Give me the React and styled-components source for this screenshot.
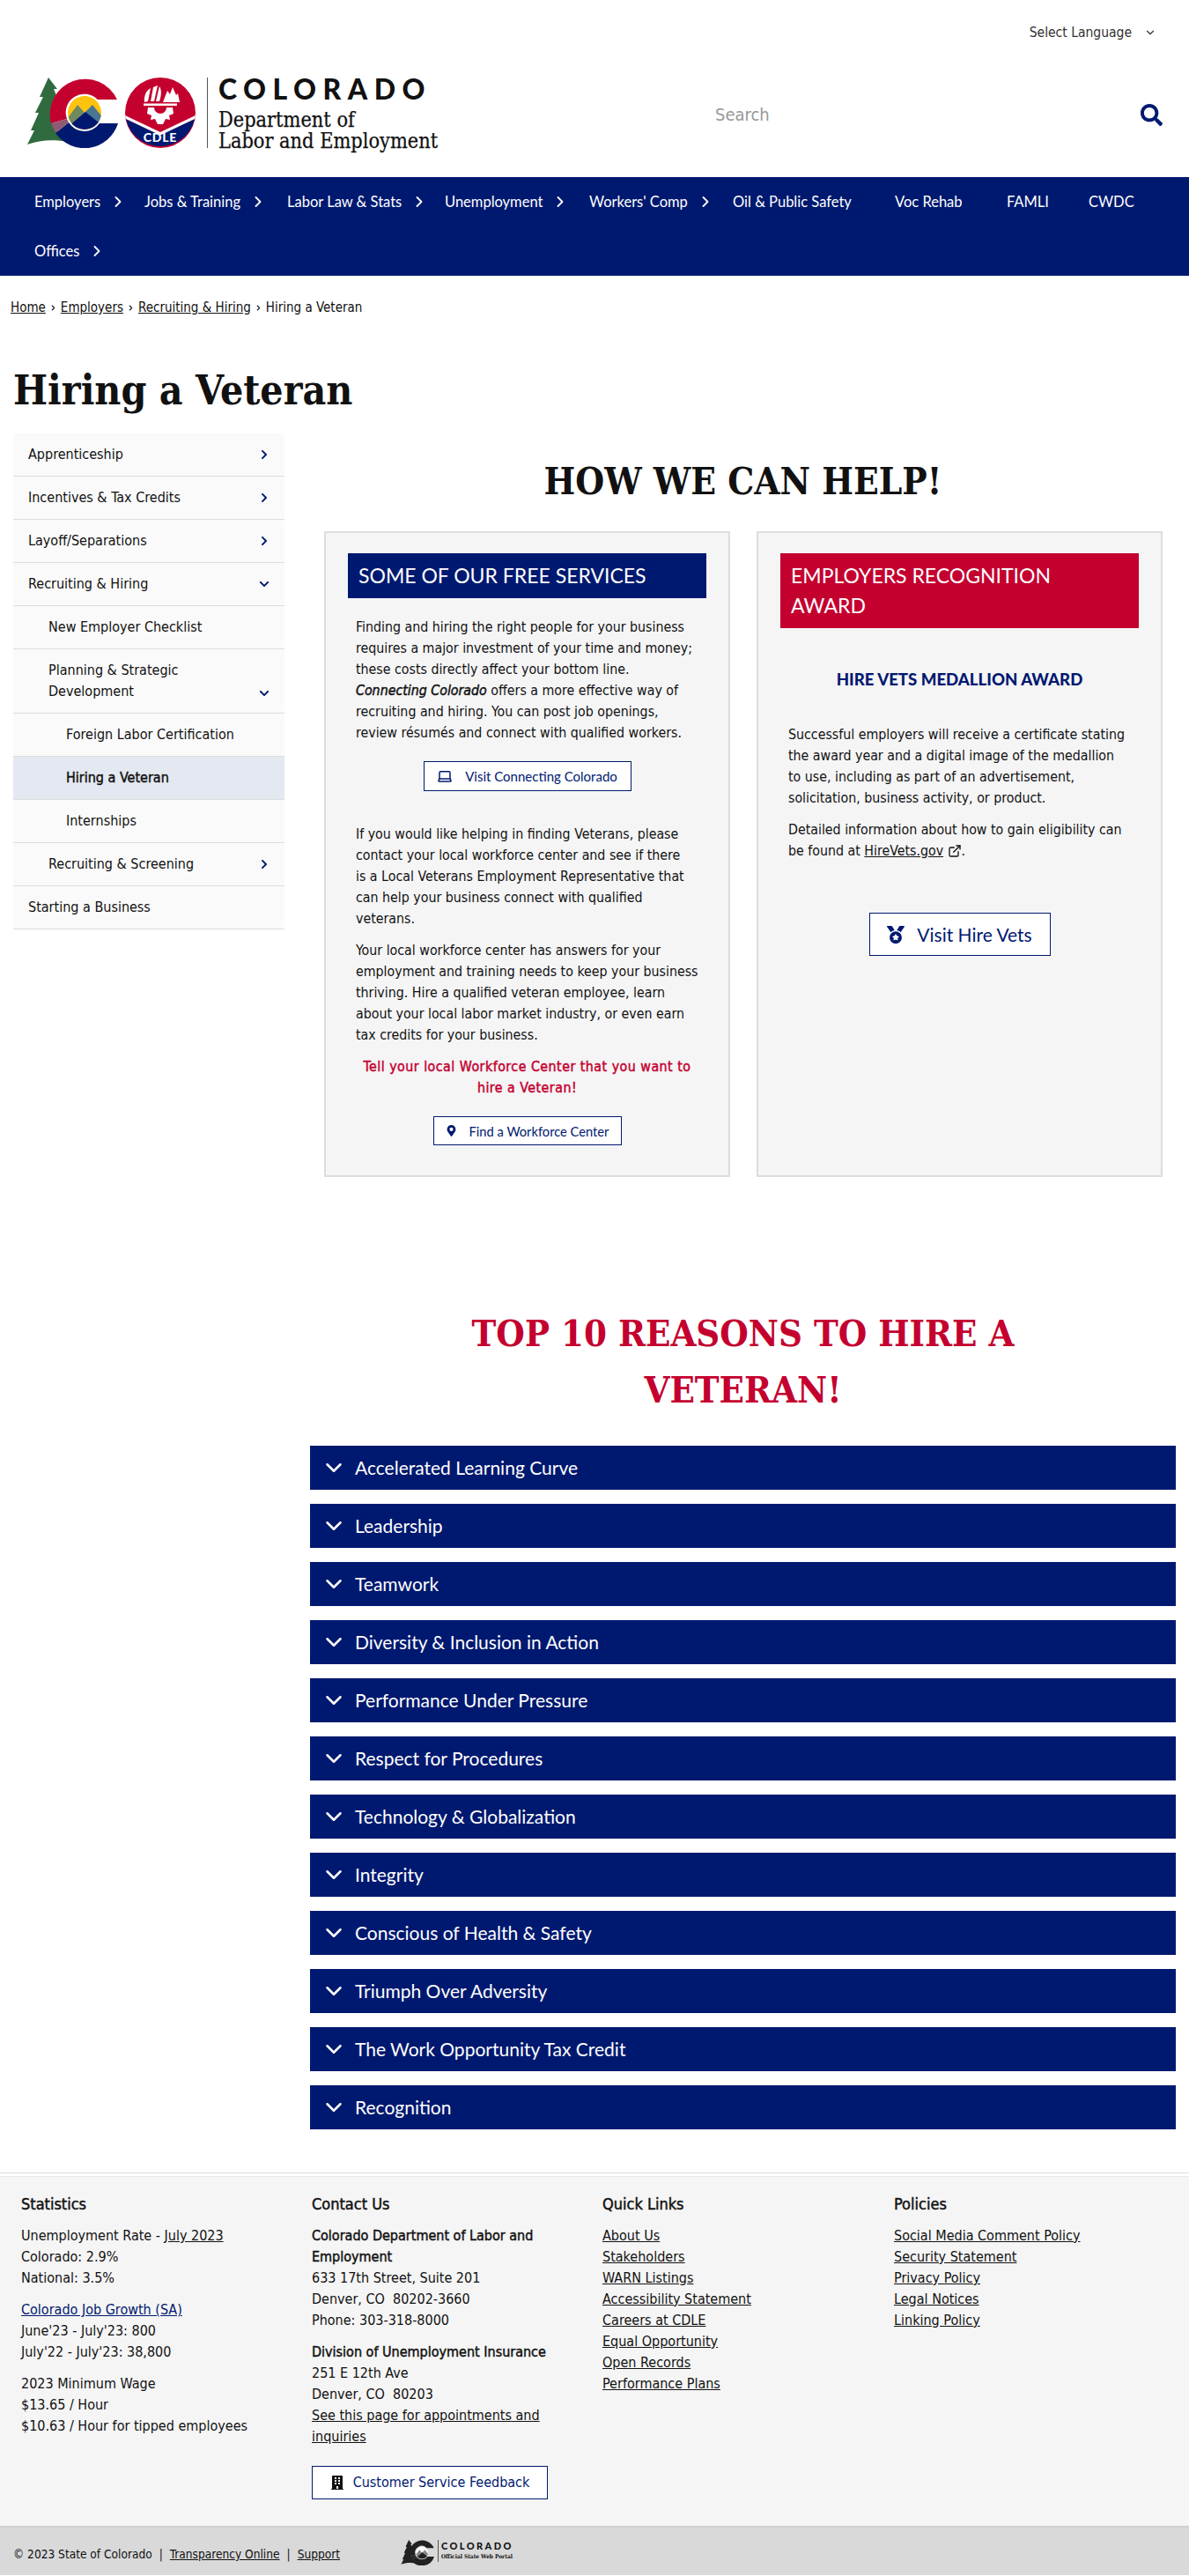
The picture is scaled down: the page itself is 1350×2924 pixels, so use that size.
import React from "react";
import styled, { createGlobalStyle, css } from "styled-components";
import { FaSearch, FaChevronRight, FaChevronDown, FaMapMarkerAlt, FaMedal, FaBuilding } from "react-icons/fa";
import { FiChevronRight, FiChevronDown, FiExternalLink } from "react-icons/fi";
import { Laptop } from "lucide-react";

const NAVY = "#001970";
const RED = "#c4002f";
const BODY = `"DejaVu Sans", "Noto Sans", sans-serif`;
const UI = `"Lato", "Noto Sans", sans-serif`;
const SLAB = `"DejaVu Serif", "Liberation Serif", serif`;

// the site's bold is thinner and narrower than DejaVu's real bold
const softBold = css`
  font-weight: 400;
  -webkit-text-stroke: 0.45px currentColor;
`;

const GlobalStyle = createGlobalStyle`
  html, body { margin: 0; padding: 0; background: #fff; }
  body { font-family: ${BODY}; font-stretch: condensed; font-size: 16px; line-height: 24px; color: #111; }
  * { box-sizing: border-box; }
  a { color: inherit; }
`;

const Page = styled.div`
  width: 1350px;
  height: 2924px;
  overflow: hidden;
`;

const Header = styled.header`
  height: 201px;
  display: flex;
  flex-direction: column;
`;

const TopBar = styled.div`
  display: flex;
  justify-content: flex-end;
  align-items: flex-start;
  gap: 14px;
  padding: 25px 37px 0 0;
  height: 88px;
  font-size: 15.5px;
  color: #333;
  svg { margin-top: 5px; }
`;

const Brand = styled.div`
  display: flex;
  align-items: flex-start;
  padding-left: 30px;
`;

const MarkGap = styled.div`
  width: 8px;
`;

const LogoDivider = styled.div`
  width: 1px;
  height: 80px;
  background: #555;
  margin: 0 12px 0 13px;
`;

const LogoText = styled.div`
  display: flex;
  flex-direction: column;
  width: 255px;
`;

const LogoState = styled.div`
  font-family: ${UI};
  font-weight: 900;
  font-size: 32px;
  line-height: 26px;
  letter-spacing: 7.5px;
  color: #111;
`;

const LogoDept = styled.div`
  font-family: ${SLAB};
  font-stretch: condensed;
  font-size: 23.3px;
  -webkit-text-stroke: 0.25px #111;
  line-height: 24px;
  margin-top: 10px;
  color: #111;
  white-space: nowrap;
`;

const SearchBox = styled.div`
  margin: 2px 0 0 309px;
  width: 508px;
  height: 80px;
  display: flex;
  align-items: center;
  justify-content: space-between;
  font-size: 20px;
  color: #999;
  svg { color: ${NAVY}; }
`;

const Nav = styled.nav`
  background: ${NAVY};
  height: 112px;
  padding-left: 39px;
  display: flex;
  flex-wrap: wrap;
  align-content: flex-start;
`;

const NavItem = styled.a`
  width: ${(p) => p.$w}px;
  height: 56px;
  display: flex;
  align-items: center;
  color: #fff;
  font-family: ${UI};
  font-size: 16.5px;
  white-space: nowrap;
  svg { margin-left: 10px; }
`;

const Crumbs = styled.div`
  display: flex;
  align-items: center;
  gap: 5px;
  padding: 15px 0 0 12px;
  font-size: 15px;
  line-height: 24px;
  color: #111;
  margin-top: 9px;
`;

const PageTitle = styled.h1`
  font-family: ${SLAB};
  font-stretch: condensed;
  font-weight: 700;
  font-size: 46px;
  line-height: 56px;
  margin: 54px 0 22px 15px;
  color: #111;
`;

const Columns = styled.div`
  display: grid;
  grid-template-columns: 308px 983px;
  column-gap: 29px;
  padding-left: 15px;
  align-items: start;
`;

const SideNav = styled.aside`
  display: flex;
  flex-direction: column;
  margin-top: -1px;
`;

const SideRow = styled.a`
  display: flex;
  align-items: ${(p) => (p.$tall ? "flex-end" : "center")};
  justify-content: space-between;
  min-height: 49px;
  padding: ${(p) => (p.$tall ? "12px" : "0")} 17px ${(p) => (p.$tall ? "12px" : "0")} ${(p) => 17 + p.$level * 23 - (p.$level === 2 ? 3 : 0)}px;
  background: ${(p) => (p.$active ? "#e4e8f1" : "#fafafa")};
  border-bottom: 1px solid #ddd;
  font-size: 16px;
  color: #111;
  ${(p) => p.$active && softBold}
  svg { color: ${NAVY}; flex: none; margin-bottom: ${(p) => (p.$tall ? "4px" : "0")}; }
`;

const SideLabel = styled.span`
  max-width: 200px;
`;

const Main = styled.main`
  display: flex;
  flex-direction: column;
`;

const SectionHeading = styled.h2`
  font-family: ${SLAB};
  font-stretch: condensed;
  font-weight: 700;
  font-size: 42px;
  line-height: 56px;
  text-align: center;
  margin: 26px 0 28px;
  color: #111;
`;

const Cards = styled.div`
  display: grid;
  grid-template-columns: 461px 461px;
  column-gap: 30px;
  padding: 0 16px;
`;

const Card = styled.section`
  height: 733px;
  background: #f5f5f6;
  border: 2px solid #ddd;
  padding: 23px 25px;
`;

const CardBanner = styled.div`
  background: ${(p) => p.$bg};
  color: #fff;
  font-family: ${UI};
  font-size: 23px;
  line-height: 34px;
  padding: 8px 12px 9px;
  margin-bottom: ${(p) => p.$gap}px;
`;

const Copy = styled.div`
  padding: 0 ${(p) => (p.$narrow ? 12 : 9)}px 0 9px;
  font-size: 15.8px;
  line-height: 24px;
  p { margin: 0 0 12px; }
`;

const Strong = styled.span`
  ${softBold}
`;

const Callout = styled.p`
  color: ${RED};
  text-align: center;
  letter-spacing: 0.5px;
  ${softBold}
`;

const AwardTitle = styled.h3`
  color: ${NAVY};
  font-family: ${UI};
  font-size: 18.6px;
  font-weight: 900;
  line-height: 24px;
  margin: 0 0 39px;
  text-align: center;
`;

const ExternalIcon = styled(FiExternalLink)`
  vertical-align: -3px;
`;

const ButtonRow = styled.div`
  display: flex;
  justify-content: ${(p) => p.$align || "center"};
  margin: ${(p) => p.$top || 0}px 0 ${(p) => p.$bottom || 0}px ${(p) => p.$left || 0}px;
`;

const OutlineButton = styled.a`
  display: flex;
  align-items: center;
  justify-content: center;
  gap: ${(p) => p.$gap}px;
  width: ${(p) => p.$w}px;
  height: ${(p) => p.$h}px;
  background: #fff;
  border: 1px solid ${NAVY};
  color: ${NAVY};
  font-family: ${(p) => (p.$body ? BODY : UI)};
  font-size: ${(p) => p.$size}px;
  white-space: nowrap;
`;

const ReasonsHeading = styled.h2`
  font-family: ${SLAB};
  font-stretch: condensed;
  font-weight: 700;
  font-size: 41.5px;
  line-height: 64px;
  text-align: center;
  color: ${RED};
  margin: 146px 160px 31px;
`;

const Accordion = styled.div`
  display: flex;
  flex-direction: column;
  gap: 16px;
`;

const AccordionRow = styled.div`
  height: 50px;
  background: ${NAVY};
  color: #fff;
  display: flex;
  align-items: center;
  gap: 9px;
  padding-left: 12px;
  font-family: ${UI};
  font-size: 21px;
`;

const Footer = styled.footer`
  margin-top: 49px;
  border-top: 1px solid #ddd;
  padding-top: 3px;
`;

const FooterMain = styled.div`
  height: 397px;
  background: #f5f5f5;
  border-top: 1px solid #e8e8e8;
  display: grid;
  grid-template-columns: 330px 330px 331px 1fr;
  padding: 19px 0 0 24px;
  font-size: 16px;
  line-height: 24px;
`;

const FooterCol = styled.div`
  p { margin: 0 0 12px; max-width: 300px; }
`;

const FooterTitle = styled.h4`
  font-size: 18px;
  line-height: 24px;
  margin: 0 0 12px;
  ${softBold}
`;

const LinkList = styled.div`
  display: flex;
  flex-direction: column;
  align-items: flex-start;
`;

const BlueLink = styled.a`
  color: ${NAVY};
`;

const BottomBar = styled.div`
  height: 56px;
  background: #d9d9d9;
  border-top: 2px solid #d0d0d0;
  display: flex;
  align-items: flex-start;
  padding: 18px 0 0 15px;
  font-size: 13.6px;
  line-height: 24px;
`;

const BottomLinks = styled.div`
  display: flex;
  gap: 8px;
  width: 440px;
`;

const PortalLogo = styled.div`
  display: flex;
  align-items: flex-start;
  gap: 4px;
  margin-top: -4px;
`;

const PortalText = styled.div`
  border-left: 1px solid #555;
  padding-left: 3px;
  display: flex;
  flex-direction: column;
`;

const PortalState = styled.span`
  font-family: ${UI};
  font-weight: 900;
  font-size: 11px;
  line-height: 14px;
  letter-spacing: 2.4px;
`;

const PortalSub = styled.span`
  font-family: ${SLAB};
  font-size: 6.5px;
  font-weight: 700;
  line-height: 11px;
`;

function StateMark({ size = 104, mono = false, id = "sky" }) {
  const green = mono ? "#222" : "#2f6b3f";
  const red = mono ? "#222" : RED;
  const navy = mono ? "#222" : NAVY;
  return (
    <svg width={size} height={size * 0.77} viewBox="0 0 104 80" aria-hidden="true">
      <defs>
        <clipPath id={id}>
          <circle cx="66" cy="40" r="19" />
        </clipPath>
      </defs>
      <path d="M25 0 L35 13 L31 13 L38 30 L30 40 L30 56 L48 73 C30 70 15 71 1 76 L9 60 L5 60 L14 40 L10 40 L19 22 L15 22 Z" fill={green} />
      <path d="M103 25 A40 40 0 0 0 28 52 L46 47 A21 21 0 0 1 80.7 25 Z" fill={red} />
      <path d="M104 52 A40 40 0 0 1 33 63 L48 51 A21 21 0 0 0 83 52 Z" fill={navy} />
      <path d="M28 52 L46 47 L48 51 L33 63 Z" fill={mono ? "#222" : "#8f5a72"} />
      <g clipPath={`url(#${id})`}>
        <rect x="45" y="20" width="42" height="42" fill={mono ? "#fff" : "#fcc30f"} />
        <path d="M46 47 L58 31 L67 41 L60 52 L46 52 Z" fill={mono ? "#888" : "#6f8a5e"} />
        <path d="M66 40 L75 31 L88 47 L88 52 L72 52 Z" fill={mono ? "#888" : "#4a7590"} />
        <path d="M47 56 L67 39 L88 56 L88 62 L47 62 Z" fill={navy} />
      </g>
    </svg>
  );
}

function CdleMark() {
  return (
    <svg width="80" height="80" viewBox="0 0 80 80" aria-hidden="true">
      <circle cx="40" cy="40" r="40" fill={RED} />
      <path d="M1 47 L40 65 L79 47 A40 40 0 0 1 1 47 Z" fill={NAVY} />
      <path d="M0 43 L40 62 L80 43 L79 47 L40 65.5 L1 47 Z" fill="#fff" />
      <path d="M22 28 C21 20 25 14 29 12 L26 27 Z M29 27 L32 11 L37 9 L33 27 Z M35 27 L39 10 C42 14 41 22 39 27 Z" fill="#fff" />
      <path d="M43 28 L48 15 L51 19 L54 11 L58 20 L60 18 L62 28 Z" fill="#fff" />
      <path d="M21 29.5 H59 V32 H21 Z" fill="#fff" />
      <path d="M26 34 H33 A7 7 0 0 0 47 34 H54 L55 41 L50 43 L51 48 L46 47 L43 53 H37 L34 47 L29 48 L30 43 L25 41 Z" fill="#fff" />
      <text x="40" y="72.5" textAnchor="middle" fontFamily="Lato, sans-serif" fontWeight="900" fontSize="14" letterSpacing="0.8" fill="#fff">CDLE</text>
    </svg>
  );
}

const navItems = [
  ["Employers", 125, true],
  ["Jobs & Training", 162, true],
  ["Labor Law & Stats", 179, true],
  ["Unemployment", 164, true],
  ["Workers' Comp", 163, true],
  ["Oil & Public Safety", 184, false],
  ["Voc Rehab", 127, false],
  ["FAMLI", 93, false],
  ["CWDC", 70, false],
  ["Offices", 100, true],
];

const sideItems = [
  { label: "Apprenticeship", level: 0, icon: "right" },
  { label: "Incentives & Tax Credits", level: 0, icon: "right" },
  { label: "Layoff/Separations", level: 0, icon: "right" },
  { label: "Recruiting & Hiring", level: 0, icon: "down" },
  { label: "New Employer Checklist", level: 1 },
  { label: "Planning & Strategic Development", level: 1, icon: "down", tall: true },
  { label: "Foreign Labor Certification", level: 2 },
  { label: "Hiring a Veteran", level: 2, active: true },
  { label: "Internships", level: 2 },
  { label: "Recruiting & Screening", level: 1, icon: "right" },
  { label: "Starting a Business", level: 0 },
];

const reasons = [
  "Accelerated Learning Curve",
  "Leadership",
  "Teamwork",
  "Diversity & Inclusion in Action",
  "Performance Under Pressure",
  "Respect for Procedures",
  "Technology & Globalization",
  "Integrity",
  "Conscious of Health & Safety",
  "Triumph Over Adversity",
  "The Work Opportunity Tax Credit",
  "Recognition",
];

const quickLinks = ["About Us", "Stakeholders", "WARN Listings", "Accessibility Statement", "Careers at CDLE", "Equal Opportunity", "Open Records", "Performance Plans"];
const policyLinks = ["Social Media Comment Policy", "Security Statement", "Privacy Policy", "Legal Notices", "Linking Policy"];

export default function App() {
  return (
    <Page>
      <GlobalStyle />
      <Header>
        <TopBar>
          Select Language <FiChevronDown size={14} />
        </TopBar>
        <Brand>
          <StateMark />
          <MarkGap />
          <CdleMark />
          <LogoDivider />
          <LogoText>
            <LogoState>COLORADO</LogoState>
            <LogoDept>Department of<br />Labor and Employment</LogoDept>
          </LogoText>
          <SearchBox>
            Search
            <FaSearch size={25} />
          </SearchBox>
        </Brand>
      </Header>
      <Nav>
        {navItems.map(([label, w, chevron]) => (
          <NavItem key={label} $w={w}>
            {label}
            {chevron && <FiChevronRight size={20} strokeWidth={2.2} />}
          </NavItem>
        ))}
      </Nav>
      <Crumbs>
        <a href="#home">Home</a><FaChevronRight size={7} />
        <a href="#employers">Employers</a><FaChevronRight size={7} />
        <a href="#recruiting">Recruiting &amp; Hiring</a><FaChevronRight size={7} />
        <span>Hiring a Veteran</span>
      </Crumbs>
      <PageTitle>Hiring a Veteran</PageTitle>
      <Columns>
        <SideNav>
          {sideItems.map((item) => (
            <SideRow key={item.label} $level={item.level} $tall={item.tall} $active={item.active}>
              <SideLabel>{item.label}</SideLabel>
              {item.icon === "right" && <FaChevronRight size={12} />}
              {item.icon === "down" && <FaChevronDown size={12} />}
            </SideRow>
          ))}
        </SideNav>
        <Main>
          <SectionHeading>HOW WE CAN HELP!</SectionHeading>
          <Cards>
            <Card>
              <CardBanner $bg={NAVY} $gap={21}>SOME OF OUR FREE SERVICES</CardBanner>
              <Copy>
                <p>
                  Finding and hiring the right people for your business requires a major investment of your time and money; these costs directly affect your bottom line.{" "}
                  <Strong><i>Connecting Colorado</i></Strong> offers a more effective way of recruiting and hiring. You can post job openings, review résumés and connect with qualified workers.
                </p>
                <ButtonRow $top={20} $bottom={37}>
                  <OutlineButton $w={236} $h={34} $size={15} $gap={14}>
                    <Laptop size={18} /> Visit Connecting Colorado
                  </OutlineButton>
                </ButtonRow>
                <p>If you would like helping in finding Veterans, please contact your local workforce center and see if there<br />is a Local Veterans Employment Representative that<br />can help your business connect with qualified<br />veterans.</p>
                <p>Your local workforce center has answers for your employment and training needs to keep your business thriving. Hire a qualified veteran employee, learn about your local labor market industry, or even earn tax credits for your business.</p>
                <Callout>Tell your local Workforce Center that you want to<br />hire a Veteran!</Callout>
                <ButtonRow $top={20}>
                  <OutlineButton $w={214} $h={33} $size={14.7} $gap={14}>
                    <FaMapMarkerAlt size={13} /> Find a Workforce Center
                  </OutlineButton>
                </ButtonRow>
              </Copy>
            </Card>
            <Card>
              <CardBanner $bg={RED} $gap={46}>EMPLOYERS RECOGNITION AWARD</CardBanner>
              <AwardTitle>HIRE VETS MEDALLION AWARD</AwardTitle>
              <Copy $narrow>
                <p>Successful employers will receive a certificate stating the award year and a digital image of the medallion to use, including as part of an advertisement, solicitation, business activity, or product.</p>
                <p>
                  Detailed information about how to gain eligibility can be found at <a href="#vets">HireVets.gov</a> <ExternalIcon size={16} />.
                </p>
                <ButtonRow $top={58} $left={3}>
                  <OutlineButton $w={206} $h={49} $size={21} $gap={14}>
                    <FaMedal size={20} /> Visit Hire Vets
                  </OutlineButton>
                </ButtonRow>
              </Copy>
            </Card>
          </Cards>
          <ReasonsHeading>TOP 10 REASONS TO HIRE A VETERAN!</ReasonsHeading>
          <Accordion>
            {reasons.map((reason) => (
              <AccordionRow key={reason}>
                <FiChevronDown size={30} strokeWidth={2} />
                {reason}
              </AccordionRow>
            ))}
          </Accordion>
        </Main>
      </Columns>
      <Footer>
        <FooterMain>
          <FooterCol>
            <FooterTitle>Statistics</FooterTitle>
            <p>Unemployment Rate - <a href="#july">July 2023</a><br />Colorado: 2.9%<br />National: 3.5%</p>
            <p><BlueLink href="#growth">Colorado Job Growth (SA)</BlueLink><br />June'23 - July'23: 800<br />July'22 - July'23: 38,800</p>
            <p>2023 Minimum Wage<br />$13.65 / Hour<br />$10.63 / Hour for tipped employees</p>
          </FooterCol>
          <FooterCol>
            <FooterTitle>Contact Us</FooterTitle>
            <p><Strong>Colorado Department of Labor and Employment</Strong><br />633 17th Street, Suite 201<br />Denver, CO&nbsp; 80202-3660<br />Phone: 303-318-8000</p>
            <p><Strong>Division of Unemployment Insurance</Strong><br />251 E 12th Ave<br />Denver, CO&nbsp; 80203<br /><a href="#ui">See this page for appointments and inquiries</a></p>
            <ButtonRow $align="flex-start" $top={21}>
              <OutlineButton $w={268} $h={38} $size={16} $gap={10} $body>
                <FaBuilding size={16} color="#111" /> Customer Service Feedback
              </OutlineButton>
            </ButtonRow>
          </FooterCol>
          <FooterCol>
            <FooterTitle>Quick Links</FooterTitle>
            <LinkList>{quickLinks.map((l) => <a key={l} href="#q">{l}</a>)}</LinkList>
          </FooterCol>
          <FooterCol>
            <FooterTitle>Policies</FooterTitle>
            <LinkList>{policyLinks.map((l) => <a key={l} href="#p">{l}</a>)}</LinkList>
          </FooterCol>
        </FooterMain>
        <BottomBar>
          <BottomLinks>
            <span>© 2023 State of Colorado</span><span>|</span><a href="#t">Transparency Online</a><span>|</span><a href="#s">Support</a>
          </BottomLinks>
          <PortalLogo>
            <StateMark size={38} mono id="sky-mono" />
            <PortalText>
              <PortalState>COLORADO</PortalState>
              <PortalSub>Official State Web Portal</PortalSub>
            </PortalText>
          </PortalLogo>
        </BottomBar>
      </Footer>
    </Page>
  );
}
